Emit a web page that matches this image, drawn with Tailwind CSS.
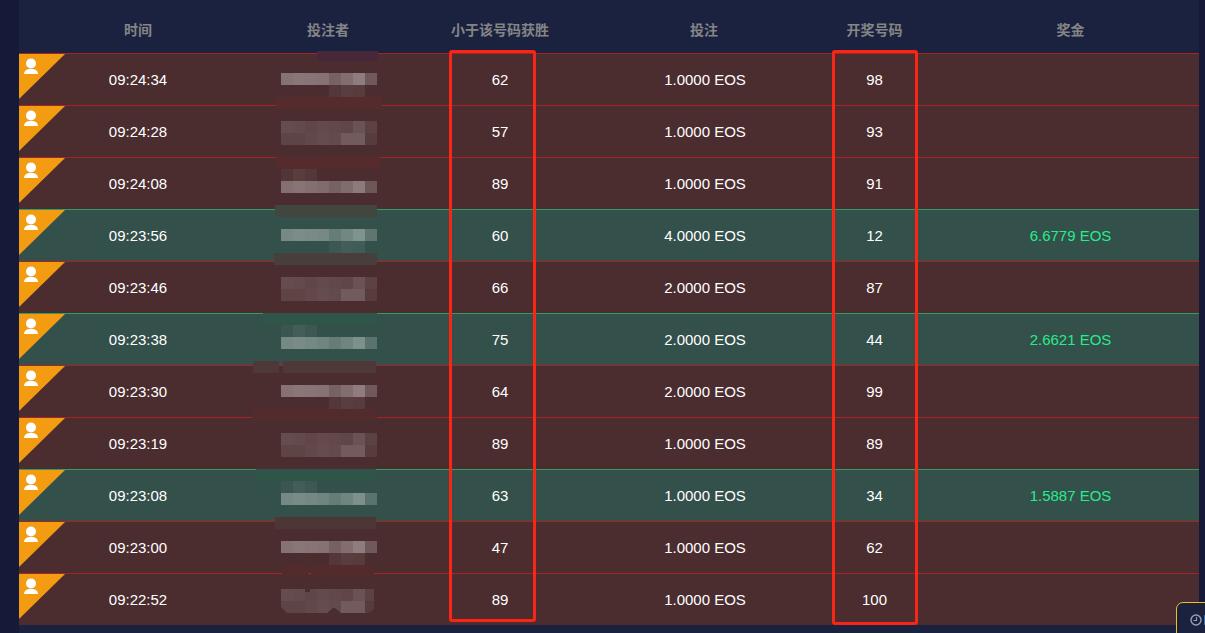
<!DOCTYPE html>
<html lang="zh">
<head>
  <meta charset="UTF-8">
  <title>投注记录</title>
  <script src="https://cdn.jsdelivr.net/npm/@tailwindcss/browser@4"></script>
</head>
<body class="bg-[#151a38]">
  <div class="relative w-[1205px] h-[633px] overflow-hidden font-['Liberation_Sans',sans-serif]">
    <div class="ml-[19px] w-[1180px] h-full bg-[#1b2240]">
      <div class="grid grid-cols-[238px_144px_198px_212px_127px_265px] h-[53px] pt-[6px] items-center text-center text-[14px] font-bold text-[#858585] font-['Noto_Sans_CJK_SC',sans-serif]">
        <div>时间</div>
        <div class="-ml-[2px]">投注者</div>
        <div>小于该号码获胜</div>
        <div class="-ml-[2px]">投注</div>
        <div>开奖号码</div>
        <div>奖金</div>
      </div>
      <div id="rows"></div>
    </div>

    <!-- blurred player names -->
    <div id="mosaic"></div>
    <svg class="absolute left-[281px] top-[589px]" width="96" height="24" viewBox="0 0 96 24" fill="#4b2d2f">
      <path d="M24 0h5v3h-5z"/>
      <path d="M0 18v6h6z"/>
      <path d="M93 0h3v24h-3z"/>
      <path d="M87 24h9v-5z"/>
      <path d="M46 24l6-5h2l6 5z"/>
    </svg>

    <!-- red highlight boxes -->
    <div class="absolute left-[449px] top-[50px] w-[87px] h-[572px] border-[3px] border-[#f92515] rounded-[3px]"></div>
    <div class="absolute left-[832px] top-[50px] w-[86px] h-[575px] border-[3px] border-[#f92515] rounded-[3px]"></div>

    <!-- floating chip bottom right -->
    <div class="absolute left-[1176px] top-[602px] w-[40px] h-[40px] bg-[#1b2240] border border-[#f0c020] rounded-tl-[7px] flex items-start pl-[13px] pt-[11px]">
      <svg width="12" height="12" viewBox="0 0 12 12" fill="none" stroke="#9a9eae" class="shrink-0">
        <circle cx="6" cy="6" r="5" stroke-width="1.4"/>
        <path d="M6.500 3v3.500H3.500" stroke-width="1.100"/>
      </svg>
      <div class="w-[2px] h-[10px] ml-[2px] mt-[1px] bg-[#3f6fa8]"></div>
    </div>
  </div>

  <script>
    const data = [
      ["09:24:34", 62, "1.0000 EOS", 98, ""],
      ["09:24:28", 57, "1.0000 EOS", 93, ""],
      ["09:24:08", 89, "1.0000 EOS", 91, ""],
      ["09:23:56", 60, "4.0000 EOS", 12, "6.6779 EOS"],
      ["09:23:46", 66, "2.0000 EOS", 87, ""],
      ["09:23:38", 75, "2.0000 EOS", 44, "2.6621 EOS"],
      ["09:23:30", 64, "2.0000 EOS", 99, ""],
      ["09:23:19", 89, "1.0000 EOS", 89, ""],
      ["09:23:08", 63, "1.0000 EOS", 34, "1.5887 EOS"],
      ["09:23:00", 47, "1.0000 EOS", 62, ""],
      ["09:22:52", 89, "1.0000 EOS", 100, ""]
    ];

    const rowsEl = document.getElementById("rows");
    data.forEach(r => {
      const won = r[4] !== "";
      const row = document.createElement("div");
      row.className = won
        ? "relative grid grid-cols-[238px_144px_198px_212px_127px_265px] h-[52px] pt-[2px] items-center text-center text-[15px] text-white border-t border-[#2f9e62] bg-[#33504a]"
        : "relative grid grid-cols-[238px_144px_198px_212px_127px_265px] h-[52px] pt-[2px] items-center text-center text-[15px] text-white border-t border-[#a82424] bg-[#4b2d2f]";
      row.innerHTML = `
        <svg class="absolute left-0 top-0" width="46" height="46" viewBox="0 0 46 46">
          <polygon points="0,0 46,0 0,45" fill="#f39c12"/>
          <circle cx="12" cy="9.500" r="5" fill="#fff"/>
          <path d="M5 20c0-3 2.500-4.500 5-5h4c2.500 .5 5 2 5 5z" fill="#fff"/>
        </svg>
        <div>${r[0]}</div>
        <div></div>
        <div>${r[1]}</div>
        <div>${r[2]}</div>
        <div>${r[3]}</div>
        <div class="text-[#27ec8a]">${r[4]}</div>`;
      rowsEl.appendChild(row);
    });

    // smudges: x, y, w, h, colour
    const smudges = [
      [317, 51, 61, 10, "#47283a"],
      [276, 97, 106, 12, "#552b2d"],
      [276, 157, 104, 12, "#552b2d"],
      [275, 205, 102, 12, "#41463f"],
      [274, 253, 103, 12, "#483f3c"],
      [263, 313, 114, 12, "#2f5448"],
      [253, 361, 26, 12, "#4f3838"],
      [283, 361, 93, 12, "#4f3838"],
      [252, 409, 125, 12, "#522c2c"],
      [256, 469, 120, 12, "#2f5448"],
      [275, 517, 101, 12, "#4c3636"],
      [282, 565, 26, 12, "#522c2c"],
      [311, 565, 63, 12, "#522c2c"]
    ];
    // mosaic strips: y, per-cell white alpha (12px cells from x=281)
    const b1 = [.33, .35, .34, .33, .25, .31, .38, .21];
    const b2 = [.32, .34, .32, .30, .25, .30, .37, .20];
    const d1 = [0, 0, 0, 0, .05, .08, .07, 0];
    const d2 = [.04, .08, .05, 0, 0, 0, 0, 0];
    const m1 = [.15, .14, .12, .14, .13, .12, .18, .10];
    const m2 = [.11, .11, .13, .15, .14, .22, .22, .07];
    const strips = [
      [73, b1], [85, d1],
      [121, m1], [133, m2],
      [169, d2], [181, b2],
      [229, b1], [241, d1],
      [277, m1], [289, m2],
      [325, d2], [337, b2],
      [385, b1], [397, d1],
      [433, m1], [445, m2],
      [481, d2], [493, b2],
      [541, b1], [553, d1],
      [589, m1], [601, m2]
    ];

    const mosaic = document.getElementById("mosaic");
    smudges.forEach(s => {
      const el = document.createElement("div");
      el.className = "absolute";
      el.style.cssText = `left:${s[0]}px;top:${s[1]}px;width:${s[2]}px;height:${s[3]}px;background:${s[4]}`;
      mosaic.appendChild(el);
    });
    strips.forEach(s => {
      s[1].forEach((a, i) => {
        if (!a) return;
        const el = document.createElement("div");
        el.className = "absolute w-[12px] h-[12px]";
        el.style.cssText = `left:${281 + i * 12}px;top:${s[0]}px;background:rgba(255,255,255,${a})`;
        mosaic.appendChild(el);
      });
    });
  </script>
</body>
</html>
